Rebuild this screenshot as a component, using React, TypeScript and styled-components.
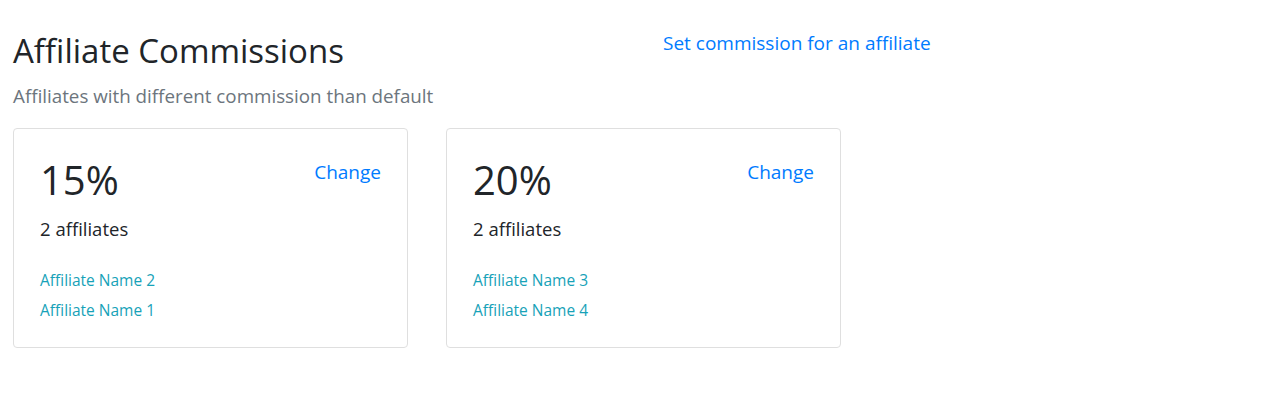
import React from "react";
import styled, { createGlobalStyle } from "styled-components";

const Global = createGlobalStyle`
  html, body { margin: 0; padding: 0; background: #fff; }
  body {
    font-family: "Open Sans", "Noto Sans", "Liberation Sans", sans-serif;
    color: #212529;
  }
  * { box-sizing: border-box; }
`;

const Page = styled.div`
  padding: 31px 13px 0 13px;
`;

const Header = styled.div`
  display: grid;
  grid-template-columns: 650px auto;
  align-items: start;
`;

const TitleBlock = styled.div`
  display: flex;
  flex-direction: column;
`;

const Title = styled.h2`
  margin: 0;
  font-size: 33px;
  font-weight: 400;
  line-height: 1.2;
`;

const Subtitle = styled.p`
  margin: 14px 0 0 0;
  font-size: 18.8px;
  line-height: 1.2;
  color: #6c757d;
`;

const HeaderLink = styled.a`
  margin-top: 1px;
  font-size: 19px;
  line-height: 1.2;
  color: #007bff;
  text-decoration: none;
`;

const CardRow = styled.div`
  display: flex;
  gap: 38px;
  margin-top: 21px;
`;

const Card = styled.div`
  width: 395px;
  height: 220px;
  border: 1px solid #dfdfdf;
  border-radius: 4px;
  padding: 27px 26px 0 26px;
  display: flex;
  flex-direction: column;
`;

const CardTop = styled.div`
  display: flex;
  justify-content: space-between;
  align-items: flex-start;
`;

const Percent = styled.div`
  font-size: 40px;
  line-height: 1.2;
`;

const ChangeLink = styled.a`
  margin-top: 5px;
  font-size: 19px;
  line-height: 1.2;
  color: #007bff;
  text-decoration: none;
`;

const Count = styled.div`
  margin-top: 14px;
  font-size: 18.5px;
  line-height: 1.2;
`;

const NameList = styled.div`
  margin-top: 30px;
  display: flex;
  flex-direction: column;
  gap: 10px;
`;

const NameLink = styled.a`
  font-size: 15.5px;
  line-height: 20px;
  color: #17a2b8;
  text-decoration: none;
`;

const groups = [
  { pct: "15%", names: ["Affiliate Name 2", "Affiliate Name 1"] },
  { pct: "20%", names: ["Affiliate Name 3", "Affiliate Name 4"] },
];

export default function App() {
  return (
    <Page>
      <Global />
      <Header>
        <TitleBlock>
          <Title>Affiliate Commissions</Title>
          <Subtitle>Affiliates with different commission than default</Subtitle>
        </TitleBlock>
        <HeaderLink href="#">Set commission for an affiliate</HeaderLink>
      </Header>
      <CardRow>
        {groups.map((g) => (
          <Card key={g.pct}>
            <CardTop>
              <Percent>{g.pct}</Percent>
              <ChangeLink href="#">Change</ChangeLink>
            </CardTop>
            <Count>{g.names.length} affiliates</Count>
            <NameList>
              {g.names.map((n) => (
                <NameLink key={n} href="#">
                  {n}
                </NameLink>
              ))}
            </NameList>
          </Card>
        ))}
      </CardRow>
    </Page>
  );
}
